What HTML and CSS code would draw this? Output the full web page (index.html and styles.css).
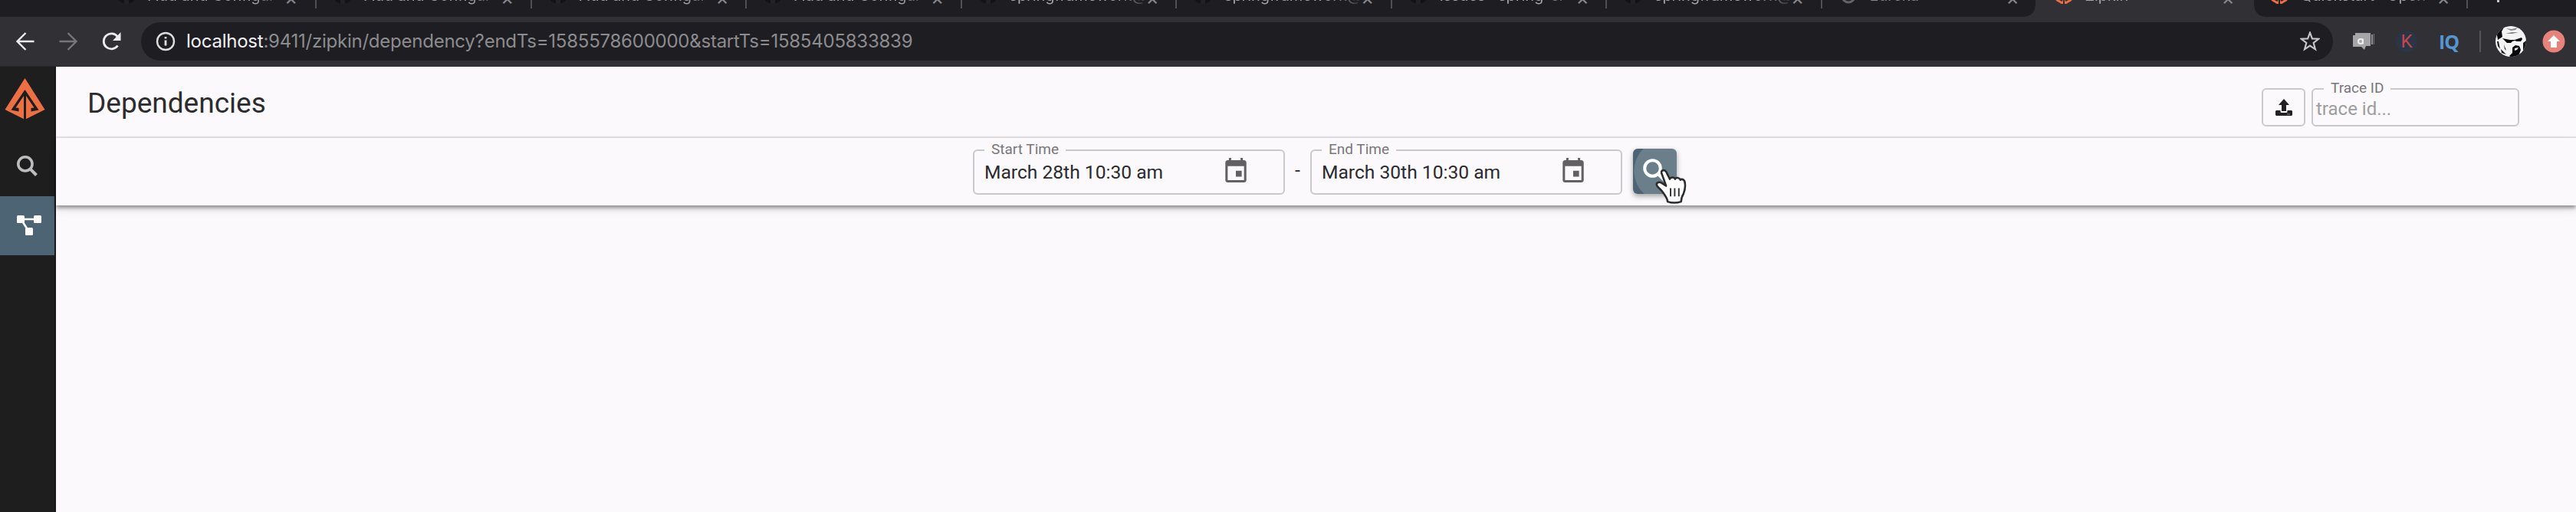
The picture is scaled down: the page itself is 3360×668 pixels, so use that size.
FILE: index.html
```html
<!DOCTYPE html>
<html lang="en">
<head>
<meta charset="utf-8">
<title>Zipkin</title>
<link rel="stylesheet" href="styles.css">
</head>
<body>
<svg class="defs" width="0" height="0">
  <symbol id="cat" viewBox="0 0 28 28"><circle cx="14" cy="14" r="13" fill="#131316"/><path d="M11 27v-7h6v7" fill="#222226"/></symbol>
  <symbol id="zip" viewBox="0 0 52 54"><path d="M26 0 52 41 26 54 0 41Z" fill="#ec7043"/><path d="M26 15 44 41.500 34 43.500 34 39 38 38.500 27.500 23V54h-3V23L14 38.500l4 .5v4.500L8 41.500Z" fill="#1e1e1f"/></symbol>
  <symbol id="cal" viewBox="3 1 18 21"><path fill="#616161" d="M17 12h-5v5h5v-5zM16 1v2H8V1H6v2H5c-1.110 0-1.990.9-1.990 2L3 20c0 1.100.89 2 2 2h14c1.100 0 2-.9 2-2V5c0-1.100-.9-2-2-2h-1V1h-2zm3 19H5V8h14v12z"/></symbol>
</svg>
<header class="tabs">
  <div class="tab first"><svg class="fav"><use href="#cat"/></svg><span class="t">Add and Configur</span><b>×</b></div>
  <div class="tab"><svg class="fav"><use href="#cat"/></svg><span class="t">Add and Configur</span><b>×</b></div>
  <div class="tab"><svg class="fav"><use href="#cat"/></svg><span class="t">Add and Configur</span><b>×</b></div>
  <div class="tab"><svg class="fav"><use href="#cat"/></svg><span class="t">Add and Configur</span><b>×</b></div>
  <div class="tab"><svg class="fav"><use href="#cat"/></svg><span class="t">springframework@</span><b>×</b></div>
  <div class="tab"><svg class="fav"><use href="#cat"/></svg><span class="t">springframework@</span><b>×</b></div>
  <div class="tab"><svg class="fav"><use href="#cat"/></svg><span class="t">Issues · spring-cl</span><b>×</b></div>
  <div class="tab"><svg class="fav"><use href="#cat"/></svg><span class="t">springframework@</span><b>×</b></div>
  <div class="tab last"><svg class="fav" viewBox="0 0 28 28"><circle cx="14" cy="18" r="8" fill="none" stroke="#66666a" stroke-width="3"/></svg><span class="t dim">Eureka</span><b>×</b></div>
  <div class="tab active"><svg class="fav" viewBox="0 0 28 28"><path d="M1 18h26l-3 6-10 6-10-6Z" fill="#ec7043"/><path d="M14 10v20M6 21l6 3m10-3-6 3" stroke="#303035" stroke-width="2"/></svg><span class="t">Zipkin</span><b>×</b></div>
  <div class="tab after"><svg class="fav" viewBox="0 0 28 28"><path d="M1 18h26l-3 6-10 6-10-6Z" fill="#ec7043"/><path d="M14 10v20M6 21l6 3m10-3-6 3" stroke="#1e1e22" stroke-width="2"/></svg><span class="t">Quickstart · Open</span><b>×</b></div>
  <i class="plus"></i>
</header>
<nav class="toolbar">
  <svg class="nav" viewBox="0 0 24 24"><path d="M23.500 12H2M12.500 1 1.500 12l11 11" stroke="#ececee"/></svg>
  <svg class="nav" viewBox="0 0 24 24"><path d="M.5 12H22M11.500 1l11 11-11 11" stroke="#77777b"/></svg>
  <svg class="nav" viewBox="0 0 24 24"><path d="M20.500 17.500a10 10 0 1 1 .2-11" stroke="#ececee" stroke-width="2.800"/><path d="M24.500 0v11H14Z" fill="#ececee"/></svg>
  <div class="address">
    <svg class="info" viewBox="0 0 26 26"><circle cx="13" cy="13" r="11" fill="none" stroke="#dededf" stroke-width="2.400"/><path d="M13 11.500v7M13 7v2.600" stroke="#dededf" stroke-width="2.800"/></svg>
    <span class="url"><em>localhost</em>:9411/zipkin/dependency?endTs=1585578600000&amp;startTs=1585405833839</span>
    <svg class="star" viewBox="0 0 24 24"><path d="m12 1.500 2.700 7.200 7.700.3-6.100 4.800 2.100 7.700L12 17.100l-6.400 4.400 2.100-7.700L1.600 9l7.700-.3Z" fill="none" stroke="#c6c6c9" stroke-width="2"/></svg>
  </div>
  <div class="ext">
    <svg class="chat" viewBox="0 0 30 24"><path d="M4 1h20v17h-6l-2 5-4-4H1V4h3Z" fill="#a5a5a7"/><path d="M26 3v13" stroke="#919193" stroke-width="2"/><path d="M28.500 2v14" stroke="#77777a"/><circle cx="11" cy="12" r="3" fill="none" stroke="#eee" stroke-width="2"/><path d="M14 8.500v7" stroke="#eee" stroke-width="2"/></svg>
    <span class="k">K</span><span class="iq">IQ</span><i class="bar"></i>
    <svg class="avatar" viewBox="0 0 40 40"><clipPath id="c"><circle cx="20" cy="20" r="20"/></clipPath><g clip-path="url(#c)"><path d="M0 0h40v40H0z" fill="#f3f3f4"/><path d="M0 0h12L8 7 9 14 3 18Z" fill="#09090b"/><path d="M9 16l10 2 6 0 9-3 1 2-2 3-5 0-3-1-3 1-2 2-5 0-3-3Z" fill="#09090b"/><path d="M22 28l4-3 5 1 2 5-3 8-8 3-4-3 4-4Z" fill="#09090b"/><path d="M2 20l2 0 2 10-3-4ZM7 30l7 7-6-2ZM36 22l4-3v9l-4 6ZM11 24l3 8-2-2Z" fill="#17171a"/><path d="M25 29l5-1-2 3-3 1Z" fill="#eee"/><path d="m14 3 7 1 8-2-3 3-6 1ZM13 10l8-2 9 0-8 2Z" fill="#88888c"/></g></svg>
    <svg class="update" viewBox="0 0 30 30"><circle cx="15" cy="15" r="14.500" fill="#e8837b"/><path d="m15 7 8 8h-4v8h-8v-8H7Z" fill="#fff"/></svg>
  </div>
</nav>
<div class="app">
  <aside>
    <svg class="logo"><use href="#zip"/></svg>
    <svg class="find" viewBox="0 0 26 26"><circle cx="10.500" cy="10.500" r="8.800" fill="none" stroke="#bdbdbf" stroke-width="3.400"/><path d="m17 17 7.500 7.500" stroke="#bdbdbf" stroke-width="4"/></svg>
    <div class="selected"><svg viewBox="0 0 32 26"><path d="M5 5h22M6 6l9 14" stroke="#fff" stroke-width="2.600"/><g fill="#fff"><rect width="10" height="10" rx="1.500"/><rect x="22" width="10" height="10" rx="1.500"/><rect x="11" y="16" width="10" height="10" rx="1.500"/></g></svg></div>
  </aside>
  <main>
    <section class="title">
      <h1>Dependencies</h1>
      <button class="upload"><svg viewBox="0 0 22 22"><path d="M11 0 18 8h-4v8H8V8H4Z" fill="#222"/><path d="M1 15h5.500v1.500q0 1.500 1.500 1.500h6q1.500 0 1.500-1.500V15H21l1 1v5l-1 1H1l-1-1v-5Z" fill="#222"/><path d="M15 20h4" stroke="#888"/></svg></button>
      <fieldset class="trace"><legend>Trace ID</legend><span>trace id...</span></fieldset>
    </section>
    <section class="range">
      <fieldset class="date"><legend class="start">Start Time</legend><span>March 28th 10:30 am</span><svg><use href="#cal"/></svg></fieldset>
      <span class="dash">-</span>
      <fieldset class="date"><legend class="end">End Time</legend><span>March 30th 10:30 am</span><svg><use href="#cal"/></svg></fieldset>
      <div class="search">
        <svg class="glass" viewBox="0 0 34 34"><circle cx="12.500" cy="12.500" r="10.300" fill="none" stroke="#fff" stroke-width="4"/><path d="m20 20 9 9" stroke="#fff" stroke-width="4.500"/></svg>
        <svg class="cursor" viewBox="0 0 44 50"><path d="M9 6c-1-4 4-5 6-2l5 10c1-3 6-3 7 0 1-3 6-2 7 1 2-2 6 0 6 4 1 5 0 10-2 15-2 3-3 6-3 10-6 2-12 2-18 0 0-4-3-8-6-12-2-4-5-5-8-9-2-4 2-6 6-4l6 4Z" fill="#fff" stroke="#292b2d" stroke-width="2.600" stroke-linejoin="round"/><path d="M21 26v11M26.500 26v11M32 26v11" stroke="#333" stroke-width="2"/></svg>
      </div>
    </section>
  </main>
</div>
</body>
</html>
```
FILE: styles.css
```css
* { box-sizing: border-box; }
body { margin: 0; width: 3360px; height: 668px; overflow: hidden; background: #fbf9fb; font-family: Roboto, "Liberation Sans", sans-serif; }
svg { display: block; flex: none; }
.defs { position: absolute; }
.tabs { display: flex; height: 22px; background: #1e1e22; overflow: hidden; color: #a6a6a9; }
.tab { display: flex; flex: none; width: 280.500px; height: 22px; padding-left: 20px; }
.tab::after { content: ""; width: 2px; height: 11px; margin-left: auto; background: #505054; }
.first { width: 413px; padding-left: 151px; }
.fav { width: 28px; height: 28px; margin-top: -22px; }
.tab > .fav[viewBox] { margin-top: -23px; }
.t { width: 176px; margin: -21px 0 0 14px; font: 20px/30px Inter, sans-serif; letter-spacing: -.1px; white-space: nowrap; -webkit-mask-image: linear-gradient(90deg, #000 78%, rgba(0,0,0,.2)); }
.dim { color: #88888b; }
.tab b { margin: -18px 0 0 2px; font: 26px/30px Inter, sans-serif; color: #88888c; }
.tab.last { width: 278px; background: radial-gradient(circle at 0 0, #1e1e22 13px, #303035 14px) right bottom / 14px 14px no-repeat; }
.last::after, .active::after { visibility: hidden; }
.tab.active { width: 285px; padding-left: 23px; background: #303035; }
.tab.after { width: 279px; padding-left: 19px; background: radial-gradient(circle at 100% 0, #1e1e22 13px, #303035 14px) left bottom / 14px 14px no-repeat; }
.plus { width: 3px; height: 3px; margin-left: 38px; background: #c8c8ca; }
.toolbar { display: flex; align-items: center; height: 65px; padding: 0 14px 0 21px; background: #303035; border-bottom: 1px solid #27272b; }
.nav { width: 24px; height: 24px; margin-right: 32px; fill: none; stroke-width: 2.400; overflow: visible; }
.nav:nth-child(3) { margin-right: 27px; }
.address { display: flex; align-items: center; width: 2861px; height: 50px; padding: 0 17px 0 19px; border-radius: 25px; background: #1e1e22; }
.info { width: 26px; height: 26px; }
.url { flex: 1; margin-left: 14px; font: 24px/50px Inter, sans-serif; letter-spacing: -.24px; color: #8c8c8f; white-space: nowrap; }
.url em { font-style: normal; color: #f0f0f2; }
.star { width: 26px; height: 26px; }
.ext { display: flex; align-items: center; margin-left: 25px; }
.chat { width: 30px; height: 24px; }
.k { width: 28px; height: 28px; margin-left: 27px; border-radius: 50%; background: #2b3546; color: #c4474d; font: 24px/28px Roboto, sans-serif; text-align: center; }
.iq { width: 28px; margin-left: 28px; color: #5795d0; font: bold 25px/28px "Open Sans", sans-serif; letter-spacing: -1px; }
.bar { width: 2px; height: 28px; margin-left: 25px; background: #55555a; }
.avatar { width: 40px; height: 40px; margin-left: 19px; }
.update { width: 30px; height: 30px; margin-left: 21px; }
.app { display: flex; height: 581px; }
aside { width: 73px; background: #1e1e1f; border-right: 2px solid #171717; }
.logo { width: 53px; height: 54px; margin: 15px 0 47px 6px; }
.find { width: 27px; height: 27px; margin-left: 22px; }
.selected { height: 77px; margin-top: 26px; padding: 25px 0 0 22px; background: #4d6475; }
.selected svg { width: 32px; height: 26px; }
main { flex: 1; }
.title { display: flex; align-items: flex-start; height: 93px; padding: 0 74px 0 41px; border-bottom: 2px solid #e5e3e6; }
h1 { flex: 1; margin: 25px 0 0; color: #2c2c2e; font-size: 37px; line-height: 46px; font-weight: 400; }
.upload { width: 57px; height: 50px; margin: 28px 8px 0 0; padding: 0 0 0 16px; border: 2px solid #c9c8ca; border-radius: 6px; background: transparent; }
.upload svg { width: 22px; height: 22px; }
fieldset { min-width: 0; margin: 0; border: 2px solid #c9c8ca; border-radius: 6px; white-space: nowrap; }
legend { height: 22px; padding: 0 9px; color: #78777a; font-size: 19px; line-height: 20px; }
.trace { width: 271px; height: 60px; margin-top: 18px; padding: 0 0 0 4px; color: #9e9da0; font-size: 24px; line-height: 30px; }
.trace legend { margin-left: 10px; }
.range { display: flex; align-items: flex-start; height: 88px; padding: 5px 0 0 1196px; box-shadow: 0 3px 5px rgba(0,0,0,.4), 0 7px 10px rgba(0,0,0,.08); }
.date { display: flex; width: 407px; height: 69px; padding: 0 0 0 13px; color: #2b2b2d; font-size: 24.600px; line-height: 35px; }
.date legend { margin: -1px 0 0 0; }
.date span { width: 314px; }
.date svg { width: 28px; height: 32px; margin-top: -1px; }
.dash { width: 33px; margin-top: 23px; color: #3b3b3d; font-size: 25px; line-height: 30px; text-align: center; }
.search { position: relative; width: 57px; height: 59px; margin: 9px 0 0 14px; padding: 13px; border-radius: 6px; background: radial-gradient(circle at 42px 29px, #6b7f8b 0 40px, #4d6475 41px); box-shadow: 0 3px 7px rgba(0,0,0,.35); }
.glass { width: 34px; height: 34px; }
.cursor { position: absolute; left: 28px; top: 26px; width: 44px; height: 49px; }
```
